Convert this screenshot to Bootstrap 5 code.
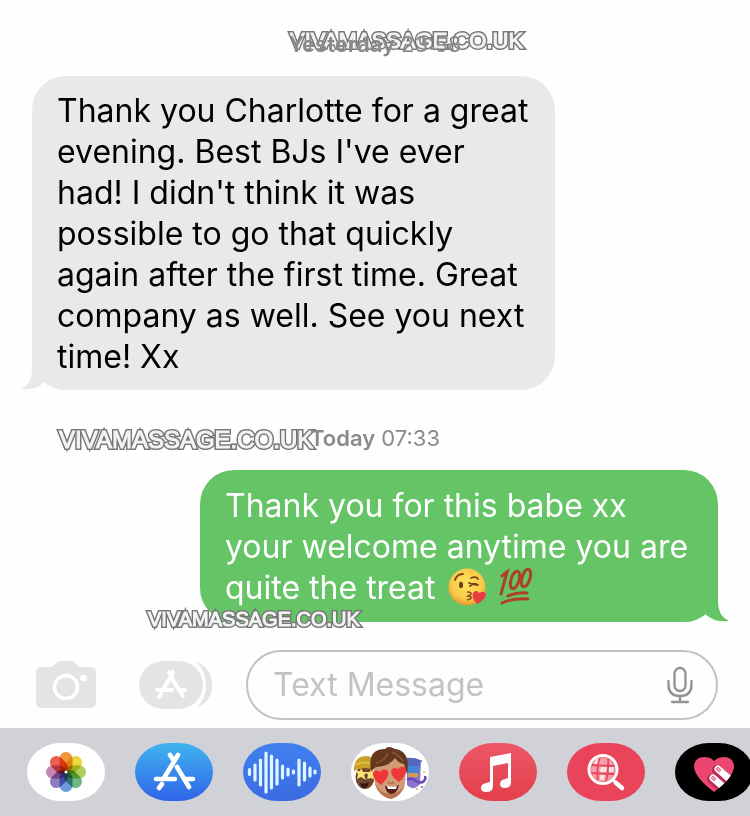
<!DOCTYPE html>
<html lang="en">
<head>
<meta charset="utf-8">
<meta name="viewport" content="width=device-width, initial-scale=1">
<title>Messages</title>
<link href="https://cdn.jsdelivr.net/npm/bootstrap@5.3.0/dist/css/bootstrap.min.css" rel="stylesheet">
<style>
body{font-family:Inter,"Liberation Sans",sans-serif;background:#fefefe;color:#000}
.thread{padding:28px 32px 0}
.stamp{font-size:22px;line-height:32px;color:#8a8a8e;position:relative;z-index:2}
.stamp b{font-weight:600}
.bubble{font-size:32px;line-height:41px;border-radius:34px;white-space:nowrap;position:relative;isolation:isolate}
.bubble-in{background:#e9e9eb;padding:14px 26px 13px 25px;min-width:523px;margin-top:16px}
.bubble-out{background:#65c466;color:#fff;padding:15px 25px 14px;min-width:518px;margin-top:16px}
.tail{position:absolute;z-index:-1;bottom:0;width:44px;height:36px}
.bubble-in .tail{left:-11px}
.bubble-out .tail{right:-11px}
.emoji{width:40px;height:40px;vertical-align:-8px;margin-left:2px}
.wm{position:absolute;z-index:1;font-family:"Liberation Sans",Arial,sans-serif;line-height:26px;white-space:nowrap;color:#777;-webkit-text-stroke:4px #777}
.wm::after{content:"VIVAMASSAGE.CO.UK";position:absolute;left:0;top:0;color:#f4f4f4;-webkit-text-stroke:1px #f4f4f4}
.wm-a{font-size:22px;left:290px;top:28px}
.wm-b{font-size:24px;left:59px;top:427px}
.wm-c{font-size:20px;left:148px;top:606px}
.composer{padding:28px 32px 8px 36px}
.tool{border:0;background:none;padding:0;line-height:0;flex:none}
.store{margin-left:43px}
.field{border:2px solid #c2c2c4;border-radius:35px;height:70px;margin-left:34px;padding:0 23px 0 25px;min-width:0}
.field input{border:0;outline:0;background:none;font-size:32px;min-width:0;width:100%;padding:0;color:#000}
.field input::placeholder{color:#c3c3c6;opacity:1}
.apps{background:#d1d2d8;padding:15px 0 15px 27px;gap:30px;overflow:hidden}
.app{border:0;padding:0;width:78px;height:58px;border-radius:34px/29px;overflow:hidden;line-height:0;flex:none}
.app svg{width:78px;height:58px}
.petals{isolation:isolate}
.petals rect{mix-blend-mode:multiply}
.app-store{background:linear-gradient(#40b4ee,#2f63e8)}
.app-audio{background:linear-gradient(#4180ee,#3b6be2)}
.app-music{background:linear-gradient(#ee5767,#e23f4a)}
.app-search{background:#ea445a}
.app-heart{background:#000}
</style>
<script src="https://cdn.jsdelivr.net/npm/bootstrap@5.3.0/dist/js/bootstrap.bundle.min.js"></script>
</head>
<body>
<main class="position-relative overflow-hidden">
<section class="thread d-flex flex-column">
<div class="stamp text-center"><b>Yesterday</b> 23:58</div>
<div class="bubble bubble-in align-self-start">
<svg class="tail" viewBox="0 0 44 36" aria-hidden="true"><path d="M11 0V16Q11 30 0 35Q14 37 24 28Q32 35 44 36V0Z" fill="#e9e9eb"/></svg>
Thank you Charlotte for a great<br>evening. Best BJs I've ever<br>had! I didn't think it was<br>possible to go that quickly<br>again after the first time. Great<br>company as well. See you next<br>time! Xx</div>
<div class="stamp text-center mt-3 pt-3"><b>Today</b> 07:33</div>
<div class="bubble bubble-out align-self-end">
<svg class="tail" viewBox="0 0 44 36" aria-hidden="true"><path d="M33 0V16Q33 30 44 35Q30 37 20 28Q12 35 0 36V0Z" fill="#65c466"/></svg>
Thank you for this babe xx<br>your welcome anytime you are<br>quite the treat
<svg class="emoji" viewBox="0 0 40 40" role="img" aria-label="Face blowing a kiss"><defs><radialGradient id="fg" cx=".5" cy=".4" r=".6"><stop offset="0" stop-color="#ffe45c"/><stop offset=".7" stop-color="#fbc94a"/><stop offset="1" stop-color="#e59a2d"/></radialGradient></defs><circle cx="20" cy="20" r="18.500" fill="url(#fg)"/><path d="M8 13q2-6 8-6M24 11q5-2 7 1M23 19q4-4 8-1M22 16l7 2" fill="none" stroke="#75451a" stroke-width="1.8" stroke-linecap="round"/><ellipse cx="14" cy="18" rx="2" ry="3.200" fill="#69401a"/><path d="M20 25q6 0 3 3l-2 1q6 1 2 3l-3 1" fill="none" stroke="#85502a" stroke-width="1.6"/><path d="M30 37Q24 30 26 26q3-4 6 0 5-3 7 1 0 5-9 10Z" fill="#e93b43"/></svg>
<svg class="emoji" viewBox="0 0 40 40" role="img" aria-label="Hundred points"><g fill="none" stroke="#b04024" stroke-width="3" stroke-linecap="round"><path d="M4 9L9 5 3 27"/><ellipse cx="17" cy="13" rx="4" ry="9" transform="rotate(17 17 13)"/><ellipse cx="28" cy="11" rx="4" ry="9" transform="rotate(17 28 11)"/><path d="M10 29Q19 25 29 26M4 36Q15 31 30 32"/></g></svg>
</div>
</section>
<form class="composer d-flex align-items-center">
<button class="tool" type="button" aria-label="Camera"><svg width="60" height="48" viewBox="0 0 60 48"><path d="M6 6h8q3 0 5-3 2-3 5-3h11q3 0 5 3 2 3 5 3h9q6 0 6 6v29q0 6-6 6H6q-6 0-6-6V12q0-6 6-6Z" fill="#e4e4e5"/><circle cx="30" cy="26" r="11.500" fill="none" stroke="#fff" stroke-width="3.500"/><circle cx="47.500" cy="17" r="3.300" fill="#fff"/></svg></button>
<button class="tool store" type="button" aria-label="Apps"><svg width="73" height="48" viewBox="0 0 73 48"><path d="M57 1Q73 7 73 24T58 46Q67 38 67 24T57 1Z" fill="#e4e4e5"/><rect width="64" height="48" rx="25" ry="24" fill="#e4e4e5"/><g stroke="#fff" stroke-width="4" stroke-linecap="round" fill="none"><path d="M34 11L24 29M30 11l3 4M33 18L44 35M18 29h15M42 29h4M22 33l-2 3"/></g></svg></button>
<div class="field d-flex align-items-center flex-grow-1"><input class="flex-grow-1" type="text" placeholder="Text Message" aria-label="Text Message">
<button class="tool" type="button" aria-label="Dictate"><svg width="26" height="38" viewBox="0 0 26 38" fill="none" stroke="#929295" stroke-width="2.300" stroke-linecap="round"><rect x="7.500" y="2" width="11" height="23" rx="5.500"/><path d="M1.500 15v4Q1.500 30 13 30T24.500 19v-4M13 30v6M5 36h16"/></svg></button></div>
</form>
<nav class="apps d-flex" aria-label="iMessage apps">
<button class="app bg-white" type="button" aria-label="Photos"><svg viewBox="-39 -29 78 58"><g class="petals">
<rect x="-6.500" y="-20" width="13" height="20" rx="6.500" fill="#f0983a"/>
<rect x="-6.500" y="-20" width="13" height="20" rx="6.500" fill="#e8d83c" transform="rotate(45)"/>
<rect x="-6.500" y="-20" width="13" height="20" rx="6.500" fill="#aecd5c" transform="rotate(90)"/>
<rect x="-6.500" y="-20" width="13" height="20" rx="6.500" fill="#6fb984" transform="rotate(135)"/>
<rect x="-6.500" y="-20" width="13" height="20" rx="6.500" fill="#6b9ada" transform="rotate(180)"/>
<rect x="-6.500" y="-20" width="13" height="20" rx="6.500" fill="#8f7fc2" transform="rotate(225)"/>
<rect x="-6.500" y="-20" width="13" height="20" rx="6.500" fill="#c486b3" transform="rotate(270)"/>
<rect x="-6.500" y="-20" width="13" height="20" rx="6.500" fill="#ea6050" transform="rotate(315)"/></g><circle r="1.500" fill="#fff"/></svg></button>
<button class="app app-store" type="button" aria-label="App Store"><svg viewBox="0 0 78 58" fill="none" stroke="#fff" stroke-width="4.600" stroke-linecap="round"><path d="M43 12L29 35M35 12l4 6M42 24L54 44M21 36h19M49 36h9M27 41l-3 4"/></svg></button>
<button class="app app-audio" type="button" aria-label="Audio messages"><svg viewBox="0 0 78 58" stroke="#e0f6ff" stroke-width="3.200" stroke-linecap="round"><path d="M6.500 26.500v5M12 22v15M17.500 17v25M23 10v39M28.500 13v32M34 17v24M39.500 23v12M45 26v6M50.500 28v2M56 17v25M61.500 20v17M67 25v8M72 28v2"/></svg></button>
<button class="app bg-white" type="button" aria-label="Memoji stickers"><svg viewBox="0 0 78 58">
<ellipse cx="14" cy="34" rx="9.500" ry="12" fill="#70472c"/><path d="M3 25Q4 13 15 13q9 0 10 10v5Q14 22 3 28Z" fill="#c9a22c"/><path d="M4 22q9-5 20 0" fill="none" stroke="#e0bd46" stroke-width="2"/><path d="M10 25l2 4 5 0-4 3 2 5-5-3-4 2 1-5-3-3h5ZM20 26l2 3h4l-3 3 1 5-4-2-4 1 1-4-2-3h4Z" fill="#f8e37a"/><path d="M9 40q5 2 9-1-1 6-5 6-3 0-4-5Z" fill="#32180f"/>
<path d="M56 18q8-5 14 0l-1 23q-7 8-13 1Z" fill="#8a73cb"/><path d="M55 15q8-1 14 2v6H55Z" fill="#5566bc"/><path d="M56 23h12v8H56Z" fill="#4186d4"/><path d="M57 30h10v4H57Z" fill="#d49a54"/><path d="M56 37q5-3 9 1 5 3 8 0 3-4 0-4" fill="none" stroke="#6947bb" stroke-width="2.500"/><g fill="#5b62d4"><circle cx="70" cy="18" r="1"/><circle cx="73" cy="29" r="1" fill="#e4ad54"/><circle cx="71" cy="44" r="1"/><circle cx="66" cy="46" r="1" fill="#e4ad54"/></g>
<path d="M23 25Q24 11 39 11T55 27l-1 14q-3 12-14 15-11-1-16-14Z" fill="#d29a77"/><path d="M24 40q3 12 16 16 11-3 14-15-4 9-14 10T24 40Z" fill="#b67453"/><path d="M20 28Q16 6 34 6q3-4 10 0 16 2 12 25-2-5-3-10-6-1-9-6-5 8-19 9-3 2-5 4Z" fill="#64381f"/><path d="M25 20q9-2 12-10M41 9q7 3 11 9" fill="none" stroke="#8a5634" stroke-width="1.500"/><path d="M37 39q3 3 6 0" fill="none" stroke="#b77455" stroke-width="2"/><path d="M34 43q7 2 14-1-2 9-8 9-5-1-6-8Z" fill="#571e1a"/><path d="M36 43q6 1 10 0l-1 3h-8Z" fill="#fff"/><path d="M30 42Q21 36 22 30q2-5 7-1 4-5 8-1 2 6-7 14Z" fill="#ee3837"/><path d="M48 39Q40 34 40 28q2-5 7-2 4-5 8 0 1 6-7 13Z" fill="#ee3837"/></svg></button>
<button class="app app-music" type="button" aria-label="Music"><svg viewBox="0 0 78 58"><path d="M31 14L52 10V39q0 6-6 6-5 0-5-4t5-5l3-1V20l-15 3v20q0 6-7 6-5 0-5-4t5-5l4-1Z" fill="#fff"/></svg></button>
<button class="app app-search" type="button" aria-label="Image search"><svg viewBox="0 0 78 58"><circle cx="36" cy="26.500" r="12" fill="#f4a0aa"/><path d="M34 23h6l-1 6h-6ZM29 16l4-1-1 6h-5ZM42 24h5l-1 5h-5ZM33 31h5l-1 6h-4Z" fill="#fff" opacity=".7"/><path d="M24 22q12 1 24 1M24 30q12 1 23 1M33 14q-4 12-2 25M41 15q1 12-2 24" fill="none" stroke="#ea445a" stroke-width="1.800"/><circle cx="36" cy="26.500" r="14" fill="none" stroke="#fff" stroke-width="3"/><path d="M46 37l3 3" stroke="#fff" stroke-width="3"/><path d="M49 40l6 5" stroke="#fff" stroke-width="4.500" stroke-linecap="round"/></svg></button>
<button class="app app-heart" type="button" aria-label="Digital touch"><svg viewBox="0 0 78 58"><defs><clipPath id="hc"><path d="M39 49Q19 34 19 23q1-9 10-9 7 0 10 4 4-4 10-4 9 0 10 9 0 11-20 26Z"/></clipPath></defs><g clip-path="url(#hc)"><path d="M0 0h78v58H0Z" fill="#ea4670"/><path d="M42 27L60 43M37 36l16 14" stroke="#b92c50" stroke-width="10" stroke-linecap="round"/><path d="M43 26L61 42M38 35l16 14" stroke="#fff" stroke-width="7" stroke-linecap="round"/></g><path d="M41 26l2-2 3 3-2 2ZM36 35l2-2 3 3-2 2Z" fill="#ee9baf" stroke="#ea4670" stroke-width=".7"/></svg></button>
</nav>
<div class="wm wm-a">VIVAMASSAGE.CO.UK</div>
<div class="wm wm-b">VIVAMASSAGE.CO.UK</div>
<div class="wm wm-c">VIVAMASSAGE.CO.UK</div>
</main>
</body>
</html>
